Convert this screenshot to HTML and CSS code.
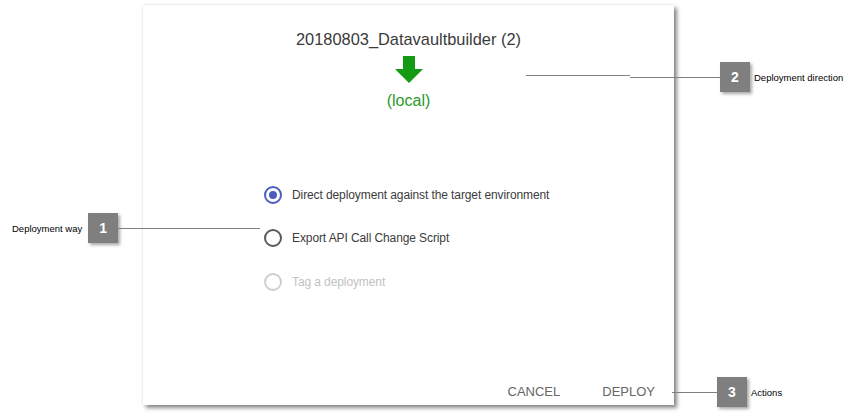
FILE: index.html
```html
<!DOCTYPE html>
<html lang="en">
<head>
  <meta charset="UTF-8" />
  <title>Deploy dialog</title>
  <link rel="stylesheet" href="styles.css">
</head>
<body>
  <div class="dialog">
    <div class="title">20180803_Datavaultbuilder (2)</div>
    <svg class="arrow" width="28" height="27" viewBox="0 0 28 27">
      <path d="M8 0 H20 V13 H28 L14 27 L0 13 H8 Z" fill="#149b14" />
    </svg>
    <div class="target">(local)</div>

    <!-- Deployment options -->
    <div class="options">
      <label class="option">
        <span class="radio checked"></span>
        <span>Direct deployment against the target environment</span>
      </label>
      <label class="option">
        <span class="radio"></span>
        <span>Export API Call Change Script</span>
      </label>
      <label class="option disabled">
        <span class="radio"></span>
        <span>Tag a deployment</span>
      </label>
    </div>

    <div class="actions">
      <button>Cancel</button>
      <button>Deploy</button>
    </div>
  </div>

  <!-- Callouts -->
  <div class="callout c1">
    <span class="label">Deployment way</span>
    <span class="num">1</span>
  </div>
  <div class="line l1"></div>

  <div class="line l2a"></div>
  <div class="line l2b"></div>
  <div class="callout c2">
    <span class="num">2</span>
    <span class="label">Deployment direction</span>
  </div>

  <div class="line l3"></div>
  <div class="callout c3">
    <span class="num">3</span>
    <span class="label">Actions</span>
  </div>
</body>
</html>
```

FILE: styles.css
```css
body {
  margin: 0;
  padding: 5px 0 0 143px;
  font-family: "Liberation Sans", Arial, sans-serif;
  background-color: #ffffff;
  color: #333333;
  position: relative;
  height: 415px;
  overflow: hidden;
}

.dialog {
  width: 531px;
  height: 400px;
  background-color: #ffffff;
  box-shadow: 3px 3px 4px rgba(0, 0, 0, 0.45), 0 0 3px rgba(0, 0, 0, 0.12);
  display: flex;
  flex-direction: column;
  align-items: center;
}

.title {
  margin-top: 24px;
  font-size: 16.4px;
  line-height: 20px;
  color: #3a3a3a;
}

.arrow {
  display: block;
  margin-top: 7px;
}

.target {
  margin-top: 8px;
  font-size: 16px;
  line-height: 19px;
  color: #2a9a2a;
}

.options {
  align-self: stretch;
  margin-top: 63px;
  padding-left: 121px;
  display: flex;
  flex-direction: column;
}

.option {
  display: flex;
  align-items: center;
  gap: 10px;
  height: 43.5px;
  font-size: 12px;
  letter-spacing: -0.1px;
  color: #3c3c3c;
}

.option.disabled {
  color: #c2c2c2;
}

.radio {
  box-sizing: border-box;
  width: 18px;
  height: 18px;
  border: 2px solid #5a5a5a;
  border-radius: 50%;
  display: flex;
  align-items: center;
  justify-content: center;
}

.radio.checked {
  border-color: #4a5cc0;
}

.radio.checked::after {
  content: "";
  width: 8px;
  height: 8px;
  border-radius: 50%;
  background-color: #4a5cc0;
}

.option.disabled .radio {
  border-color: #cfcfcf;
}

.actions {
  margin-top: auto;
  align-self: stretch;
  display: flex;
  justify-content: flex-end;
  gap: 26px;
  padding: 0 11px 4px 0;
}

.actions button {
  font-family: inherit;
  font-size: 13px;
  line-height: 18px;
  text-transform: uppercase;
  color: #666666;
  background: none;
  border: none;
  padding: 0 8px;
}

.callout {
  position: absolute;
  display: flex;
  align-items: center;
  gap: 4px;
  font-size: 9.5px;
  color: #000000;
}

.num {
  width: 30px;
  height: 30px;
  background-color: #7f7f7f;
  color: #ffffff;
  font-size: 14px;
  font-weight: bold;
  display: flex;
  align-items: center;
  justify-content: center;
  box-shadow: 2px 2px 3px rgba(0, 0, 0, 0.35);
}

.c1 { left: 12px; top: 213px; gap: 6px; }
.c2 { left: 720px; top: 62px; }
.c3 { left: 717px; top: 377px; }

.line {
  position: absolute;
  height: 1px;
  background-color: #808080;
}

.l1 { left: 118px; top: 228px; width: 142px; }
.l2a { left: 526px; top: 75px; width: 104px; }
.l2b { left: 630px; top: 77px; width: 90px; }
.l3 { left: 672px; top: 392px; width: 45px; }
```
